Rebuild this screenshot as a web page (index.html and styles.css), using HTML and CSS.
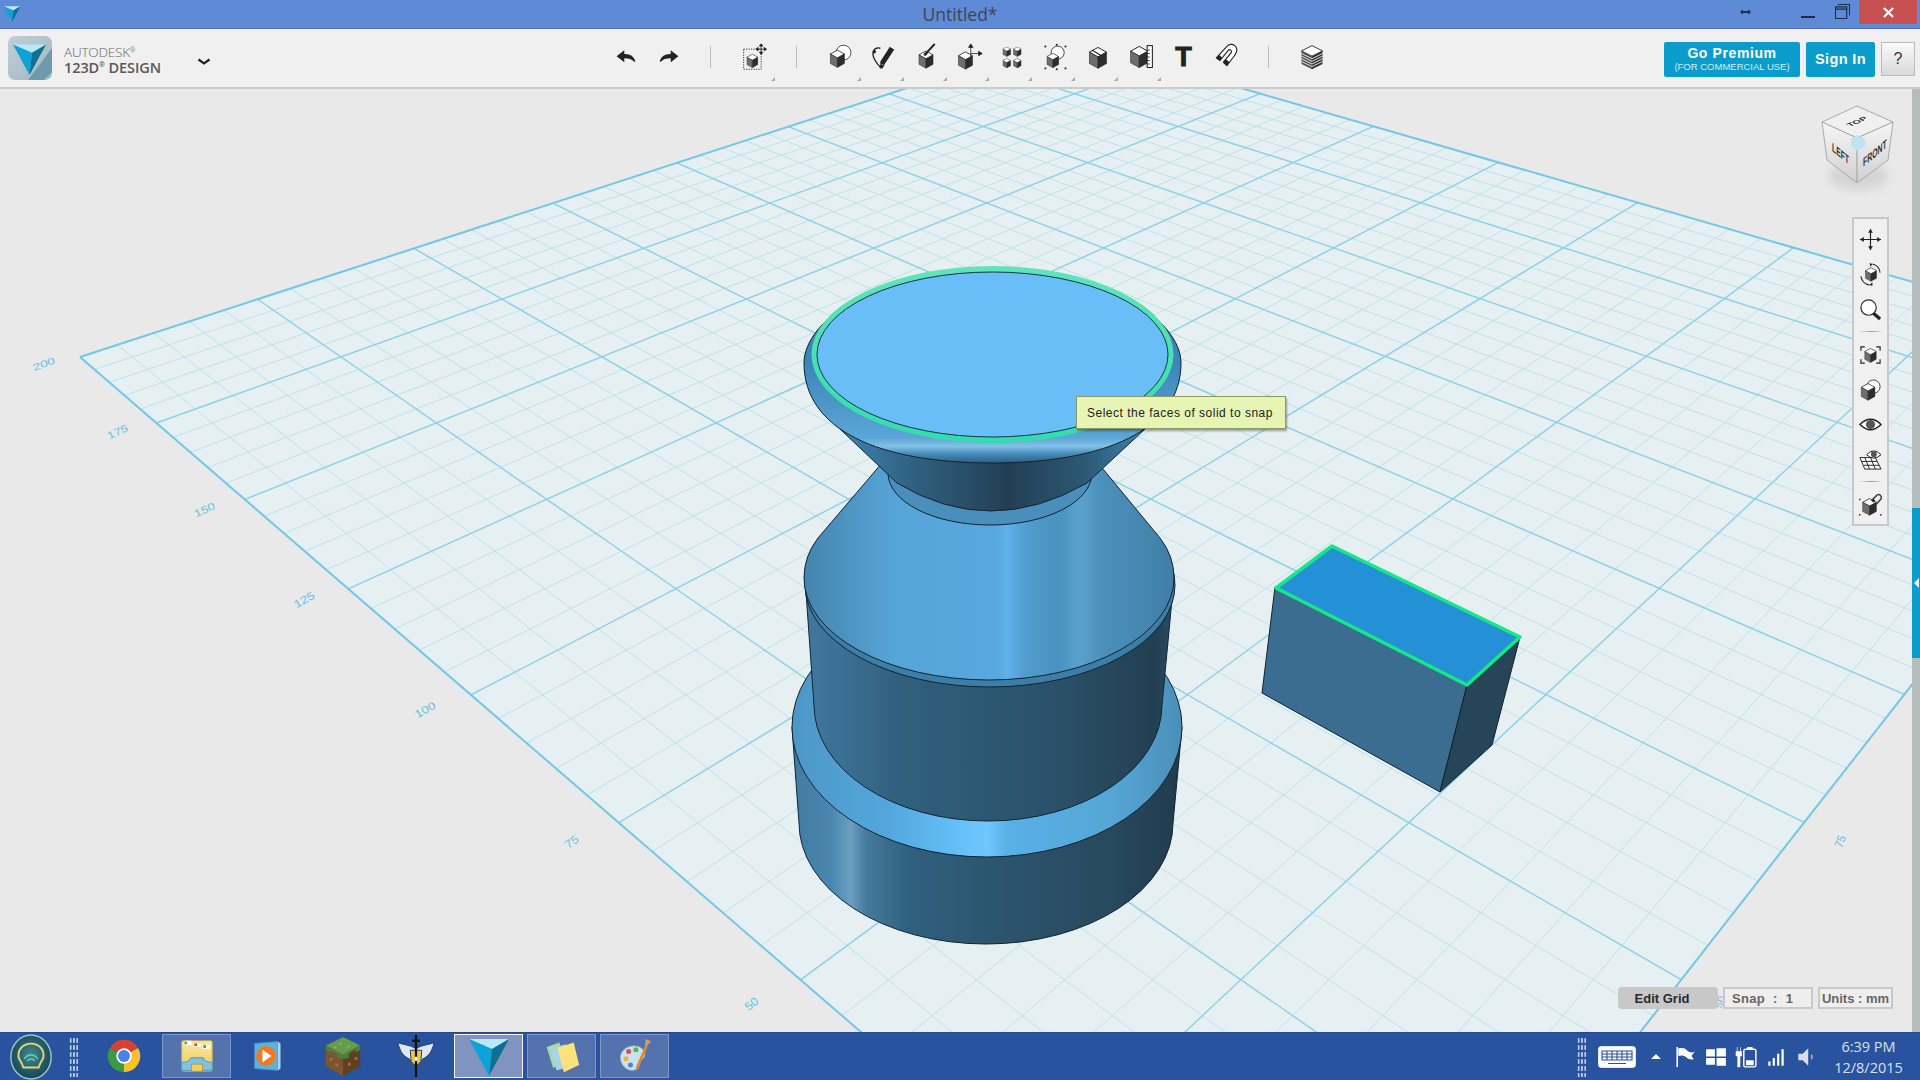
FILE: index.html
```html
<!DOCTYPE html>
<html lang="en">
<head>
<meta charset="utf-8">
<title>Untitled* - 123D Design</title>
<link rel="stylesheet" href="styles.css">
</head>
<body>
<svg class="defs" width="0" height="0" aria-hidden="true">
  <defs>
    <symbol id="cube" viewBox="0 0 20 24">
      <polygon points="10,1 19,6 10,11 1,6" fill="#fff" stroke="#222" stroke-width="1"/>
      <polygon points="1,6 10,11 10,23 1,18" fill="#6e6e6e" stroke="#222" stroke-width=".6"/>
      <polygon points="19,6 10,11 10,23 19,18" fill="#2d2d2d" stroke="#222" stroke-width=".6"/>
    </symbol>
    <symbol id="logo" viewBox="0 0 40 40">
      <polygon points="0,3 40,3 23,13" fill="#b9e8f8"/>
      <polygon points="0,3 23,13 20,40" fill="#0fa2d8"/>
      <polygon points="40,3 23,13 20,40" fill="#0d7196"/>
    </symbol>
    <linearGradient id="gCyl" x1="0" x2="1" y1="0" y2="0">
      <stop offset="0" stop-color="#3f7ba3"/>
      <stop offset=".1" stop-color="#4a86ad"/>
      <stop offset=".15" stop-color="#6a9fc0"/>
      <stop offset=".19" stop-color="#457a9c"/>
      <stop offset=".3" stop-color="#30607f"/>
      <stop offset=".5" stop-color="#2c566f"/>
      <stop offset=".8" stop-color="#284a60"/>
      <stop offset="1" stop-color="#213b4d"/>
    </linearGradient>
    <linearGradient id="gMid" x1="0" x2="1" y1="0" y2="0">
      <stop offset="0" stop-color="#41789f"/>
      <stop offset=".1" stop-color="#3c7094"/>
      <stop offset=".25" stop-color="#30607d"/>
      <stop offset=".7" stop-color="#2a5068"/>
      <stop offset=".95" stop-color="#233f52"/>
      <stop offset="1" stop-color="#2c4d63"/>
    </linearGradient>
    <linearGradient id="gRing" x1="0" x2="1" y1="0" y2="0">
      <stop offset="0" stop-color="#4d97c7"/>
      <stop offset=".25" stop-color="#53a7dc"/>
      <stop offset=".42" stop-color="#64bff8"/>
      <stop offset=".5" stop-color="#6ec8ff"/>
      <stop offset=".55" stop-color="#58b0e6"/>
      <stop offset=".82" stop-color="#55a6d6"/>
      <stop offset="1" stop-color="#4a8fb8"/>
    </linearGradient>
    <linearGradient id="gCone" x1="0" x2="1" y1="0" y2="0">
      <stop offset="0" stop-color="#4585ae"/>
      <stop offset=".25" stop-color="#56a5d8"/>
      <stop offset=".52" stop-color="#58a8de"/>
      <stop offset=".55" stop-color="#5fb1ea"/>
      <stop offset=".6" stop-color="#509dce"/>
      <stop offset=".69" stop-color="#4a92bf"/>
      <stop offset=".746" stop-color="#5aa2ce"/>
      <stop offset=".8" stop-color="#4c91bb"/>
      <stop offset="1" stop-color="#407fa7"/>
    </linearGradient>
    <linearGradient id="gDark" x1="0" x2="1" y1="0" y2="0">
      <stop offset="0" stop-color="#3f83af"/>
      <stop offset=".25" stop-color="#2f607f"/>
      <stop offset=".55" stop-color="#233f54"/>
      <stop offset=".8" stop-color="#2c5873"/>
      <stop offset="1" stop-color="#3f83af"/>
    </linearGradient>
    <linearGradient id="gRim" x1="0" x2="0" y1="0" y2="1">
      <stop offset="0" stop-color="#3a7fad"/>
      <stop offset=".49" stop-color="#3c86b8"/>
      <stop offset=".87" stop-color="#5ba6d6"/>
      <stop offset=".915" stop-color="#83c1e5"/>
      <stop offset=".95" stop-color="#4a8fbe"/>
      <stop offset="1" stop-color="#2a5f82"/>
    </linearGradient>
    <linearGradient id="gGreen" x1="0" x2="0" y1="0" y2="1">
      <stop offset="0" stop-color="#62e3bb"/>
      <stop offset="1" stop-color="#32dcae"/>
    </linearGradient>
    <linearGradient id="gFaceL" x1="0" x2="0" y1="0" y2="1">
      <stop offset="0" stop-color="#f6f6f6"/>
      <stop offset="1" stop-color="#cfcfcf"/>
    </linearGradient>
    <radialGradient id="gOrb" cx=".5" cy=".45" r=".6">
      <stop offset="0" stop-color="#3f8a8c"/>
      <stop offset="1" stop-color="#123f50"/>
    </radialGradient>
    <linearGradient id="gFolder" x1="0" x2="0" y1="0" y2="1">
      <stop offset="0" stop-color="#fbe79c"/>
      <stop offset="1" stop-color="#eec964"/>
    </linearGradient>
  </defs>
</svg>

<div class="app">
  <header class="titlebar">
    <div class="title-left">
      <svg class="title-logo" viewBox="0 0 40 40"><use href="#logo"/></svg>
    </div>
    <div class="title-text">Untitled*</div>
    <div class="window-controls">
      <svg class="wc-resize" viewBox="0 0 12 8"><path d="M0 4 L3 1 V3 H9 V1 L12 4 L9 7 V5 H3 V7Z" fill="#1f2f4f"/></svg>
      <span class="wc-min"></span>
      <svg class="wc-restore" viewBox="0 0 16 16"><path d="M3 0.5 H15.5 V12 M0.5 3 H12.5 V15.5 H0.5 Z M0.5 5.5 H12.5" fill="none" stroke="#1a2a48" stroke-width="1.2"/></svg>
      <div class="wc-close"><svg viewBox="0 0 12 12"><path d="M1 1 L11 11 M11 1 L1 11" stroke="#fff" stroke-width="2.4"/></svg></div>
    </div>
  </header>

  <div class="toolbar">
    <div class="brand">
      <div class="brand-icon">
        <svg viewBox="0 0 44 44" class="brand-svg">
          <polygon points="44,12 44,36 36,44 20,44" fill="#6f9aac"/>
          <use href="#logo" x="4" y="6" width="35" height="33"/>
        </svg>
      </div>
      <div class="brand-text">
        <span class="brand-top">AUTODESK<sup>®</sup></span>
        <span class="brand-bottom">123D<sup>®</sup> DESIGN</span>
      </div>
      <svg class="brand-chevron" viewBox="0 0 14 8"><path d="M1.5 1.5 L7 5.5 L12.5 1.5" fill="none" stroke="#222" stroke-width="2.2"/></svg>
    </div>

    <div class="tools">
      <div class="tool"><svg class="ti" viewBox="0 0 28 28"><path d="M3 13 L12 6 V10.5 Q22 10 25 19 L23.5 19.5 Q20 15.5 12 15.5 V20 Z" fill="#222"/></svg></div>
      <div class="tool"><svg class="ti" viewBox="0 0 28 28"><path d="M25 13 L16 6 V10.5 Q6 10 3 19 L4.5 19.5 Q8 15.5 16 15.5 V20 Z" fill="#222"/></svg></div>
      <div class="tool"><span class="vsep"></span></div>
      <div class="tool more"><svg class="ti ti-lg" viewBox="0 0 32 32">
        <rect x="3" y="7" width="20" height="23" fill="none" stroke="#222" stroke-dasharray="1.4 1.4"/>
        <use href="#cube" x="6" y="12" width="14" height="17"/>
        <path d="M23 1 V13 M17 7 H29 M23 1 l-2 2.5 h4Z M23 13 l-2 -2.5 h4Z M17 7 l2.5 -2 v4Z M29 7 l-2.5 -2 v4Z" fill="#222" stroke="#222" stroke-width=".9"/>
      </svg></div>
      <div class="tool"><span class="vsep"></span></div>
      <div class="tool more"><svg class="ti ti-lg" viewBox="0 0 32 32">
        <circle cx="20" cy="11" r="8.5" fill="#fff" stroke="#333"/>
        <use href="#cube" x="4" y="7" width="18" height="22"/>
      </svg></div>
      <div class="tool more"><svg class="ti ti-lg" viewBox="0 0 32 32">
        <path d="M13 6 C5 4 3 12 6 18 C8 22 11 26 14 28 C17 27 18 24 16 21" fill="none" stroke="#222" stroke-width="1.5"/>
        <circle cx="6" cy="10" r="2" fill="#222"/><circle cx="14" cy="27" r="2.2" fill="#222"/>
        <path d="M13 21 L24 4 L29 7 L18 24 L13 25Z" fill="#222"/>
        <path d="M24 4 L29 7" stroke="#fff"/>
      </svg></div>
      <div class="tool more"><svg class="ti ti-lg" viewBox="0 0 32 32">
        <use href="#cube" x="7" y="8" width="18" height="22"/>
        <path d="M15 13 L26 1" stroke="#222" stroke-width="2.4"/>
        <path d="M13 13 l3 -3 l2 2 l-3 3Z" fill="#222"/>
      </svg></div>
      <div class="tool more"><svg class="ti ti-lg" viewBox="0 0 32 32">
        <use href="#cube" x="3" y="9" width="18" height="22"/>
        <path d="M18 2 V17 M18 12 H31 M18 1 l-2.5 4 h5Z M31 12 l-4 -2.5 v5Z" fill="#222" stroke="#222" stroke-width=".9"/>
      </svg></div>
      <div class="tool more"><svg class="ti ti-lg" viewBox="0 0 32 32">
        <use href="#cube" x="5" y="4" width="10" height="12"/><use href="#cube" x="17" y="4" width="10" height="12"/>
        <use href="#cube" x="5" y="17" width="10" height="12"/><use href="#cube" x="17" y="17" width="10" height="12"/>
      </svg></div>
      <div class="tool more"><svg class="ti ti-lg" viewBox="0 0 32 32">
        <circle cx="19" cy="11" r="7.5" fill="#fff" stroke="#333"/>
        <use href="#cube" x="6" y="11" width="15" height="18"/>
        <g fill="#222"><rect x="4" y="3" width="2" height="2"/><rect x="17" y="1" width="2" height="2"/><rect x="27" y="3" width="2" height="2"/><rect x="4" y="28" width="2" height="2"/><rect x="27" y="28" width="2" height="2"/><rect x="17" y="29" width="2" height="2"/></g>
      </svg></div>
      <div class="tool more"><svg class="ti ti-lg" viewBox="0 0 32 32">
        <use href="#cube" x="5" y="4" width="22" height="26"/>
        <path d="M9 8 L19 14" stroke="#222" stroke-width="1.2"/>
      </svg></div>
      <div class="tool more"><svg class="ti ti-lg" viewBox="0 0 32 32">
        <use href="#cube" x="3" y="2" width="22" height="28"/>
        <rect x="23" y="3" width="6" height="25" fill="#fff" stroke="#222" stroke-width="1.2"/>
        <path d="M23 8 h3 M23 12 h3 M23 16 h3 M23 20 h3 M23 24 h3" stroke="#222"/>
      </svg></div>
      <div class="tool"><span class="text-tool">T</span></div>
      <div class="tool"><svg class="ti ti-lg" viewBox="0 0 32 32">
        <path d="M5 17 L17 4 A6 6 0 0 1 27 12 A6 6 0 0 1 26 14 L17 26 L13 22 L22 11 A2.2 2.2 0 0 0 19 8 L9 20Z" fill="#fff" stroke="#222" stroke-width="1.3"/>
        <path d="M5 17 L9 20 L12 17 L8 13.5Z M13 22 L17 26 L20 22 L16 18.5Z" fill="#222"/>
      </svg></div>
      <div class="tool"><span class="vsep"></span></div>
      <div class="tool"><svg class="ti ti-lg" viewBox="0 0 32 32">
        <polygon points="16,3 28,9 16,15 4,9" fill="#fff" stroke="#222"/>
        <polygon points="4,9 16,15 16,30 4,24" fill="#555"/>
        <polygon points="28,9 16,15 16,30 28,24" fill="#333"/>
        <path d="M4 12 L16 18 L28 12 M4 15 L16 21 L28 15 M4 18 L16 24 L28 18 M4 21 L16 27 L28 21" fill="none" stroke="#eee" stroke-width="1"/>
      </svg></div>
    </div>

    <div class="account">
      <button class="btn btn-premium"><b>Go Premium</b><small>(FOR COMMERCIAL USE)</small></button>
      <button class="btn btn-sign">Sign In</button>
      <button class="btn-help">?</button>
    </div>
  </div>

  <main class="workspace">
    <div class="canvas">
      <svg class="scene" viewBox="0 89 1912 943" width="1912" height="943">
        <g id="grid"></g>
        <g class="axis-labels">
          <text transform="translate(45,367) rotate(-20) scale(1.15,.8)" text-anchor="middle">200</text>
          <text transform="translate(119,435) rotate(-24) scale(1.1,.85)" text-anchor="middle">175</text>
          <text transform="translate(206,513) rotate(-24) scale(1.1,.85)" text-anchor="middle">150</text>
          <text transform="translate(306,603) rotate(-30) scale(1.1,.9)" text-anchor="middle">125</text>
          <text transform="translate(427,713) rotate(-30) scale(1.1,.9)" text-anchor="middle">100</text>
          <text transform="translate(574,845) rotate(-35) scale(1.05,.95)" text-anchor="middle">75</text>
          <text transform="translate(754,1007) rotate(-38) scale(1.05,.95)" text-anchor="middle">50</text>
          <text transform="translate(1844,843) rotate(-68) scale(.9,1)" text-anchor="middle">75</text>
          <text transform="translate(1723,1003) rotate(-70) scale(.9,.8)" text-anchor="middle">50</text>
        </g>

        <g class="model" stroke="#12232e" stroke-width="1">
          <path d="M792 727 L799 823 A187 121 0 0 0 1173 823 L1182 727 Z" fill="url(#gCyl)"/>
          <ellipse cx="987" cy="727" rx="195" ry="130" fill="url(#gRing)"/>
          <path d="M805 578 L814 705 A174 116 0 0 0 1162 705 L1174 578 Z" fill="url(#gMid)"/>
          <ellipse cx="990" cy="585" rx="185" ry="102" fill="#3d7ea8"/>
          <path d="M882 463 L818 538 Q804 556 804 578 A185 102 0 0 0 1174 578 Q1174 556 1160 538 L1098 463 Z" fill="url(#gCone)"/>
          <path d="M888 473 A102 52 0 0 0 1092 473 Z" fill="#4a8ebb"/>
          <path d="M840 429 L897 483 Q990 539 1087 483 L1145 429 Z" fill="url(#gDark)"/>
          <path d="M804 363 C804 320 880 268 992 268 C1104 268 1181 320 1181 363 C1181 430 1105 463 992 463 C879 463 804 430 804 363 Z" fill="url(#gRim)"/>
          <ellipse cx="992.5" cy="354.5" rx="181" ry="88.5" fill="url(#gGreen)" stroke="none"/>
          <ellipse cx="992.5" cy="354.5" rx="175.5" ry="82.5" fill="#69bef8" stroke="#103a40"/>
          <polygon points="1275,587 1467,685 1440,792 1262,693" fill="#3a6d90"/>
          <polygon points="1467,685 1520,637 1492,745 1440,792" fill="#264558"/>
          <polygon points="1332,546 1520,637 1467,685 1276,588" fill="#2490d6" stroke="#16e88a" stroke-width="3.5" stroke-linejoin="round"/>
        </g>
      </svg>

      <div class="tooltip">Select the faces of solid to snap</div>

      <svg class="viewcube" viewBox="1810 96 94 100">
        <ellipse cx="1858" cy="176" rx="30" ry="14" fill="#bbb" opacity=".45" class="cube-shadow"/>
        <polygon points="1857,106 1893,122 1857,138 1822,122" fill="#f0f0f0" stroke="#aaa"/>
        <polygon points="1822,122 1857,138 1857,183 1827,160" fill="url(#gFaceL)" stroke="#aaa"/>
        <polygon points="1893,122 1857,138 1857,183 1888,160" fill="url(#gFaceL)" stroke="#aaa"/>
        <polygon points="1857,135 1865,139 1865,146 1857,151 1851,146 1851,139" fill="#bfe3f0"/>
        <g class="cube-text">
          <text transform="matrix(.82,-.36,.55,.35,1850,127)">TOP</text>
          <text transform="matrix(.62,.5,0,1.1,1832,151)">LEFT</text>
          <text transform="matrix(.63,-.52,0,1.1,1863,167)">FRONT</text>
        </g>
      </svg>

      <div class="navbar">
        <svg class="nav-ic" viewBox="0 0 24 24"><path d="M12 1 V23 M1 12 H23" stroke="#222" stroke-width="1.2"/><path d="M12 1 l-2.5 4 h5Z M12 23 l-2.5 -4 h5Z M1 12 l4 -2.5 v5Z M23 12 l-4 -2.5 v5Z" fill="#222"/></svg>
        <svg class="nav-ic" viewBox="0 0 24 24">
          <use href="#cube" x="6" y="4" width="13" height="16"/>
          <path d="M2 14 A10.5 10.5 0 0 0 11 23 M14 1 A10.5 10.5 0 0 1 22 10" fill="none" stroke="#222" stroke-width="1.2"/>
          <path d="M11 23 l3 -3 v4Z M14 1 l-3 -1 l1 4Z" fill="#222"/>
        </svg>
        <svg class="nav-ic" viewBox="0 0 24 24"><circle cx="10" cy="10" r="8" fill="#fff" stroke="#333" stroke-width="1.3"/><path d="M15 16 L22 22" stroke="#222" stroke-width="3.4"/></svg>
        <span class="nav-sep"></span>
        <svg class="nav-ic" viewBox="0 0 24 24">
          <path d="M6 4 H2 V8 M18 4 H22 V8 M2 17 V21 H6 M22 17 V21 H18" fill="none" stroke="#222" stroke-width="1.2"/>
          <use href="#cube" x="5" y="5" width="14" height="16"/>
        </svg>
        <svg class="nav-ic" viewBox="0 0 24 24">
          <circle cx="15" cy="9" r="7" fill="#fff" stroke="#444"/>
          <use href="#cube" x="1" y="5" width="17" height="19"/>
        </svg>
        <svg class="nav-ic" viewBox="0 0 24 24"><path d="M1 12 Q12 1 23 12 Q12 23 1 12Z" fill="#fff" stroke="#222" stroke-width="1.5"/><circle cx="12" cy="12" r="4.8" fill="#555"/></svg>
        <svg class="nav-ic" viewBox="0 0 24 24">
          <path d="M1 10 H17 L23 22 H6Z M6 10 L11 22 M12 10 L17 22 M3 14 H19 M5 18 H21" fill="#fff" stroke="#222"/>
          <path d="M8 7 Q15 -1 23 7 Q15 14 8 7Z" fill="#fff" stroke="#222"/><circle cx="15.5" cy="6.5" r="3" fill="#555"/>
        </svg>
        <span class="nav-sep"></span>
        <svg class="nav-ic" viewBox="0 0 24 24">
          <use href="#cube" x="2" y="5" width="18" height="19"/>
          <path d="M13 8 L19 2 A3 3 0 0 1 23 6 L18 12" fill="none" stroke="#444" stroke-width="1.6"/>
          <path d="M13 8 l2 -2 l2 2 l-2 2Z" fill="#222"/>
          <g fill="#222"><rect x="0" y="6" width="1.5" height="1.5"/><rect x="0" y="22" width="1.5" height="1.5"/><rect x="22" y="22" width="1.5" height="1.5"/></g>
        </svg>
      </div>

      <div class="grid-controls">
        <button class="edit-grid">Edit Grid</button>
        <div class="grid-box snap-box"><span>Snap</span><span>:</span><span>1</span></div>
        <div class="grid-box units-box">Units : mm</div>
      </div>
    </div>

    <aside class="sidebar-rail">
      <div class="rail-thumb"><span class="rail-arrow"></span></div>
    </aside>
  </main>

  <footer class="taskbar">
    <div class="start">
      <svg class="orb" viewBox="0 0 44 48">
        <ellipse cx="22" cy="24" rx="21" ry="23" fill="url(#gOrb)" stroke="#9fc4c8" stroke-width="1.5"/>
        <path d="M22 10 C30 10 36 16 35 24 C34 28 31 30 30 35 H14 C13 30 10 28 9 24 C8 16 14 10 22 10Z" fill="none" stroke="#e9d27a" stroke-width="2"/>
        <path d="M15 26 A8 8 0 0 1 29 26 M18 28 A5 5 0 0 1 26 28" fill="none" stroke="#5fd0c0" stroke-width="1.6"/>
      </svg>
      <span class="grip"></span>
    </div>
    <div class="tasks">
      <div class="task"><svg class="task-ic" viewBox="0 0 40 40">
        <path d="M20 20 L4.4 11 A18 18 0 0 1 35.6 11Z" fill="#d8412f"/>
        <path d="M20 20 L35.6 11 A18 18 0 0 1 20 38Z" fill="#f5c12e"/>
        <path d="M20 20 L20 38 A18 18 0 0 1 4.4 11Z" fill="#3a9a45"/>
        <circle cx="20" cy="20" r="8.6" fill="#fff"/><circle cx="20" cy="20" r="6.6" fill="#4a80e8"/>
      </svg></div>
      <div class="task open"><svg class="task-ic" viewBox="0 0 40 40">
        <rect x="3" y="3" width="34" height="34" rx="2" fill="url(#gFolder)" stroke="#c9a94e"/>
        <rect x="6" y="3" width="8" height="5" fill="#fff"/><rect x="16" y="6" width="8" height="4" fill="#fff"/><rect x="26" y="8" width="9" height="4" fill="#fff"/>
        <rect x="6" y="4" width="3" height="3" fill="#5aa850"/><rect x="17" y="6" width="3" height="3" fill="#d04a3a"/><rect x="27" y="8" width="3" height="3" fill="#3a8ac8"/>
        <path d="M3 36 V27 Q12 27 13 22 H27 Q28 27 37 27 V36Z" fill="#7ec4e0" stroke="#4e93b6"/>
        <rect x="14" y="29" width="12" height="8" fill="#f2cf62" stroke="#b8952f"/>
      </svg></div>
      <div class="task task-shift"><svg class="task-ic" viewBox="0 0 40 40">
        <path d="M6 6 L32 4 V36 L6 34Z" fill="#5cb1e0" stroke="#3b8cc2"/>
        <path d="M32 4 L35 6 V34 L32 36Z" fill="#a9d8f0"/>
        <circle cx="19" cy="20" r="11" fill="#ef7a22"/>
        <path d="M15 13 L25 20 L15 27Z" fill="#fff"/>
      </svg></div>
      <div class="task"><svg class="task-ic task-big" viewBox="0 0 40 44">
        <polygon points="20,2 38,11 20,21 2,11" fill="#679a4b"/>
        <polygon points="2,11 20,21 20,43 2,33" fill="#7b5432"/>
        <polygon points="38,11 20,21 20,43 38,33" fill="#60401f"/>
        <path d="M2 11 L20 21 L38 11 V16 L33 18 V15 L26 20 V24 L20 25 L14 23 V20 L8 17 V19 L2 15Z" fill="#4e8239"/>
        <g fill="#96704a"><rect x="6" y="24" width="3" height="3"/><rect x="12" y="30" width="3" height="3"/><rect x="25" y="29" width="3" height="3"/><rect x="32" y="23" width="3" height="3"/></g>
        <g fill="#82b45f"><rect x="16" y="8" width="3" height="2"/><rect x="24" y="11" width="3" height="2"/><rect x="10" y="12" width="3" height="2"/></g>
      </svg></div>
      <div class="task"><svg class="task-ic task-big" viewBox="0 0 40 44">
        <path d="M20 14 C12 10 6 10 1 8 C3 16 6 22 13 25 L16 30 H24 L27 25 C34 22 37 16 39 8 C34 10 28 10 20 14Z" fill="#dfe8f2" stroke="#24426e"/>
        <path d="M14 16 H26 L25 28 L20 33 L15 28Z" fill="#f0c93a" stroke="#20365c"/>
        <path d="M20 0 V44" stroke="#111" stroke-width="2.4"/>
        <path d="M16 6 H24" stroke="#111" stroke-width="2.4"/>
        <path d="M20 22 l2 3 l-2 3 l-2 -3Z" fill="#fff"/>
      </svg></div>
      <div class="task active"><svg class="task-ic task-big" viewBox="0 0 40 40"><use href="#logo"/></svg></div>
      <div class="task open"><svg class="task-ic" viewBox="0 0 40 40">
        <polygon points="3,10 17,5 25,28 10,33" fill="#a5dba0"/>
        <polygon points="7,12 24,7 31,31 14,36" fill="#a6d4ee"/>
        <polygon points="15,11 33,5 39,30 22,38" fill="#fbe27b"/>
      </svg></div>
      <div class="task open"><svg class="task-ic" viewBox="0 0 40 40">
        <path d="M4 24 C2 12 16 6 25 10 C33 14 32 22 27 24 C23 26 26 30 23 34 C15 39 6 34 4 24Z" fill="#c9e2ee" stroke="#8db4c8"/>
        <circle cx="13" cy="15" r="2.8" fill="#d8524a"/><circle cx="21" cy="13" r="2.8" fill="#61b04f"/><circle cx="10" cy="23" r="2.8" fill="#e8b33a"/><circle cx="15" cy="30" r="2.8" fill="#5a82c8"/>
        <path d="M22 34 L33 8" stroke="#e08a30" stroke-width="3"/>
        <path d="M31 10 L32 1 L38 4 Z" fill="#c8a276"/>
      </svg></div>
    </div>
    <div class="tray">
      <span class="grip"></span>
      <svg class="tray-kbd" viewBox="0 0 38 22">
        <rect x=".7" y=".7" width="36.6" height="20.6" rx="2" fill="#fff" stroke="#fff"/>
        <path d="M4 5 H34 V14 H4Z M4 8 H34 M4 11 H34 M9 5 V14 M14 5 V14 M19 5 V14 M24 5 V14 M29 5 V14 M10 17.5 H28" fill="none" stroke="#2a52a0" stroke-width="1.1"/>
      </svg>
      <div class="tray-slot"><span class="tray-up"></span></div>
      <div class="tray-slot"><svg class="tray-ic" viewBox="0 0 20 20"><path d="M2 1 V19" stroke="#fff" stroke-width="1.4"/><path d="M3 2 Q9 1 11 4 Q14 7 18 5 L15 9 L17 12 Q12 13 10 10 Q7 8 3 9Z" fill="#fff"/></svg></div>
      <div class="tray-slot"><svg class="tray-ic" viewBox="0 0 20 20"><path d="M1 3 H9 V9.5 H1Z M10.5 2 H19 V9.5 H10.5Z M1 11 H9 V17 H1Z M10.5 11 H19 V18 H10.5Z" fill="#fff"/></svg></div>
      <div class="tray-slot"><svg class="tray-ic" viewBox="0 0 20 20"><path d="M2 1 V5 M5 1 V5 M1 5 H6 V9 H4.5 V19 H2.5 V9 H1Z" fill="#fff" stroke="#fff" stroke-width=".6"/><rect x="8" y="3" width="11" height="16" rx="1.5" fill="none" stroke="#fff" stroke-width="1.3"/><rect x="11" y="1" width="5" height="2" fill="#fff"/><rect x="10" y="13" width="7" height="4.5" fill="#fff"/></svg></div>
      <div class="tray-slot"><svg class="tray-ic" viewBox="0 0 20 20"><path d="M3 14 h2 v4 h-2Z M7 11 h2 v7 h-2Z M11 7 h2 v11 h-2Z M15 3 h2 v15 h-2Z" fill="#fff"/></svg></div>
      <div class="tray-slot"><svg class="tray-ic" viewBox="0 0 20 20"><path d="M3 7 H7 L12 2 V18 L7 13 H3Z" fill="#d8dde8"/><path d="M15 8 Q16 10 15 12" fill="none" stroke="#d8dde8"/></svg></div>
      <div class="clock"><span>6:39 PM</span><span>12/8/2015</span></div>
    </div>
  </footer>
</div>
<script src="grid.js"></script>
</body>
</html>
```
FILE: styles.css
```css
* { box-sizing: border-box; }
html, body { margin: 0; height: 100%; overflow: hidden; }
body { font-family: "Liberation Sans", Arial, sans-serif; background: #e9e9e9; }
.defs { position: absolute; }
.app { display: flex; flex-direction: column; width: 1920px; height: 1080px; }

/* title bar */
.titlebar { flex: none; height: 29px; display: grid; grid-template-columns: 1fr auto 1fr; background: #5f8ad6; border-bottom: 1px solid #4d71ad; }
.title-left { display: flex; align-items: flex-start; padding: 5px 0 0 2px; }
.title-logo { width: 20px; height: 17px; }
.title-text { font-family: "Open Sans", sans-serif; font-size: 17.5px; line-height: 29px; color: #3e4652; }
.window-controls { display: flex; align-items: flex-start; justify-content: flex-end; padding-right: 3px; }
.wc-resize { width: 11px; height: 8px; margin-top: 8px; margin-right: 50px; }
.wc-min { width: 14px; height: 2px; margin-top: 16px; margin-right: 20px; background: #1a2a48; }
.wc-restore { width: 15px; height: 15px; margin-top: 4px; margin-right: 9px; }
.wc-close { width: 58px; height: 24px; background: #c75050; display: flex; align-items: center; justify-content: center; }
.wc-close svg { width: 11px; height: 11px; }

/* toolbar */
.toolbar { flex: none; height: 60px; display: flex; align-items: stretch; background: #f0f0f0; border-bottom: 2px solid #cbcbcb; }
.brand { flex: none; width: 604.6px; display: flex; align-items: center; padding: 0 0 0 8px; }
.brand-icon { width: 44px; height: 44px; border-radius: 7px; background: linear-gradient(135deg, #c0ced5, #a2b8c2); overflow: hidden; margin-top: -1px; }
.brand-svg { width: 44px; height: 44px; display: block; }
.brand-text { display: flex; flex-direction: column; margin-left: 12px; margin-top: 4px; width: 131px; font-family: "Open Sans", sans-serif; line-height: 15px; }
.brand-text sup { font-size: 7px; line-height: 0; }
.brand-top { font-size: 13.5px; font-weight: 300; color: #666; letter-spacing: -.2px; }
.brand-bottom { font-size: 14.5px; font-weight: 600; color: #595959; letter-spacing: -.1px; }
.brand-chevron { width: 14px; height: 8px; margin-top: 8px; margin-left: 2px; }
.tools { flex: none; display: grid; grid-template-columns: repeat(17, 42.875px); }
.tool { position: relative; display: flex; align-items: center; justify-content: center; padding-bottom: 2px; }
.tool.more::after { content: ""; position: absolute; right: 1px; bottom: 6px; width: 0; height: 0; border-left: 4px solid transparent; border-bottom: 4px solid #aaa; }
.ti { width: 24px; height: 24px; display: block; }
.ti-lg { width: 28px; height: 28px; }
.vsep { width: 1px; height: 22px; margin-left: -2px; background: #bdbdbd; }
.text-tool { font-family: "Liberation Sans", sans-serif; font-weight: 700; font-size: 27px; line-height: 28px; color: #222; -webkit-text-stroke: .9px #222; }
.account { margin-left: auto; display: flex; align-items: flex-start; gap: 6px; padding: 13px 5px 0 0; }
.btn { border: 0; border-radius: 2px; background: #0a9dcb; color: #fff; font-family: "Liberation Sans", sans-serif; padding: 0 0 2px; display: flex; flex-direction: column; align-items: center; justify-content: center; }
.btn-premium { width: 136px; height: 35px; }
.btn-premium b { font-size: 14px; line-height: 15px; letter-spacing: .6px; }
.btn-premium small { font-size: 9.5px; line-height: 11px; color: #d2eef8; }
.btn-sign { width: 69px; height: 35px; font-weight: 700; font-size: 14.5px; letter-spacing: .4px; }
.btn-help { width: 34px; height: 34px; border: 1px solid #bbb; background: linear-gradient(#fafafa, #d9d9d9); color: #333; font-size: 16px; padding: 0; font-family: "Liberation Sans", sans-serif; }

/* workspace */
.workspace { flex: 1; min-height: 0; display: flex; }
.canvas { position: relative; flex: 1; overflow: hidden; background: #e9e9e9; }
.scene { display: block; }
.axis-labels { font-family: "Liberation Sans", sans-serif; font-size: 12px; fill: #67c0e0; }
.tooltip { position: absolute; left: 1076px; top: 307px; width: 210px; height: 33px; background: #e6f5b3; border: 1px solid #8f9a62; box-shadow: 1px 2px 2px rgba(0,0,0,.35); font-size: 12px; letter-spacing: .5px; line-height: 32px; padding-left: 10px; color: #222; white-space: nowrap; }
.viewcube { position: absolute; left: 1810px; top: 7px; width: 94px; height: 100px; }
.cube-shadow { filter: blur(5px); }
.cube-text { font-family: "Liberation Sans", sans-serif; font-weight: 700; font-size: 11px; fill: #333; }
.navbar { position: absolute; left: 1852px; top: 128px; width: 37px; height: 309px; background: #f0f0f0; border: 2px solid #c9c9c9; display: flex; flex-direction: column; align-items: center; padding-top: 8.5px; gap: 12px; }
.nav-ic { flex: none; width: 23px; height: 23px; display: block; }
.nav-sep { flex: none; width: 24px; height: 1px; margin: -1.5px 0; background: linear-gradient(90deg, transparent, #999, transparent); }
.grid-controls { position: absolute; left: 1618px; top: 898px; display: flex; gap: 5px; height: 22px; font-size: 13px; font-weight: 700; }
.edit-grid { width: 100px; height: 22px; border: 0; border-radius: 4px; background: #c8c8c8; color: #2a2a2a; font: inherit; padding: 0 12px 0 0; }
.grid-box { height: 22px; border: 2px solid #c8c8c8; background: #eeeeee; color: #666; display: flex; align-items: center; }
.snap-box { width: 90px; padding-left: 7px; gap: 8px; letter-spacing: .3px; }
.units-box { width: 75px; justify-content: center; white-space: nowrap; }
.sidebar-rail { flex: none; width: 8px; background: #b4bcbc; padding-top: 419px; }
.rail-thumb { height: 150px; background: #0a9dcb; display: flex; align-items: center; justify-content: center; }
.rail-arrow { width: 0; height: 0; border-top: 5px solid transparent; border-bottom: 5px solid transparent; border-right: 5px solid #e8f6fb; }

/* task bar */
.taskbar { flex: none; height: 48px; display: flex; align-items: stretch; background: #29529f; border-top: 1px solid #23488e; }
.start { flex: none; width: 89px; display: flex; align-items: center; padding-left: 9px; }
.orb { width: 44px; height: 46px; }
.grip { flex: none; display: block; width: 10px; height: 40px; margin-left: 16px; background-image: radial-gradient(#c5d2ea 1px, transparent 1.2px); background-size: 3.3px 7px; }
.tasks { display: flex; gap: 4px; padding: 1px 0 2px; }
.task { width: 69px; display: flex; align-items: center; justify-content: center; border: 1px solid transparent; }
.task.open { background: #5372ae; border-color: #7e97c6; }
.task.active { background: #8094bf; border-color: #f2f5fb; }
.task-shift { padding-right: 6px; }
.task-ic { width: 36px; height: 38px; }
.task-big { width: 40px; height: 42px; }
.tray { margin-left: auto; display: flex; align-items: center; padding-right: 8px; }
.tray .grip { margin-left: 0; margin-right: 11px; }
.tray-kbd { width: 38px; height: 22px; margin-right: 5px; }
.tray-slot { width: 30px; display: flex; align-items: center; justify-content: center; }
.tray-ic { width: 22px; height: 22px; }
.tray-up { width: 0; height: 0; border-left: 5px solid transparent; border-right: 5px solid transparent; border-bottom: 5px solid #fff; }
.clock { width: 87px; margin-left: 4px; display: flex; flex-direction: column; align-items: center; font-family: "Open Sans", sans-serif; font-size: 14.5px; line-height: 21px; color: #d9e1f0; }
```
FILE: grid.js
```js
// Projects the 200 x 200 mm build grid onto the screen from its four corners.
(function () {
  var NS = "http://www.w3.org/2000/svg";
  var g = document.getElementById("grid");
  var D = [1326, 1434], C = [2169, 356], B = [1064, 37], A = [80, 357];

  var dx1 = C[0] - B[0], dx2 = A[0] - B[0], sx = D[0] - C[0] + B[0] - A[0];
  var dy1 = C[1] - B[1], dy2 = A[1] - B[1], sy = D[1] - C[1] + B[1] - A[1];
  var den = dx1 * dy2 - dx2 * dy1;
  var p = (sx * dy2 - dx2 * sy) / den;
  var q = (dx1 * sy - sx * dy1) / den;
  var a = C[0] - D[0] + p * C[0], b = A[0] - D[0] + q * A[0];
  var d = C[1] - D[1] + p * C[1], e = A[1] - D[1] + q * A[1];

  function project(u, v) {
    var w = p * u + q * v + 1;
    return [(a * u + b * v + D[0]) / w, (d * u + e * v + D[1]) / w];
  }

  function add(tag, attrs) {
    var el = document.createElementNS(NS, tag);
    for (var k in attrs) el.setAttribute(k, attrs[k]);
    g.appendChild(el);
  }

  add("polygon", { points: [D, C, B, A].join(" "), fill: "#e6eff1" });

  function line(from, to, stroke, width) {
    add("line", { x1: from[0], y1: from[1], x2: to[0], y2: to[1], stroke: stroke, "stroke-width": width });
  }

  var passes = [
    { test: function (i) { return i % 5 !== 0; }, stroke: "#bfe2ea", width: 1 },
    { test: function (i) { return i % 5 === 0 && i !== 0 && i !== 40; }, stroke: "#8ad0e8", width: 1.4 },
    { test: function (i) { return i === 0 || i === 40; }, stroke: "#72c7e6", width: 2 }
  ];
  passes.forEach(function (pass) {
    for (var i = 0; i <= 40; i++) {
      if (!pass.test(i)) continue;
      var t = i / 40;
      line(project(t, 0), project(t, 1), pass.stroke, pass.width);
      line(project(0, t), project(1, t), pass.stroke, pass.width);
    }
  });
})();
```
